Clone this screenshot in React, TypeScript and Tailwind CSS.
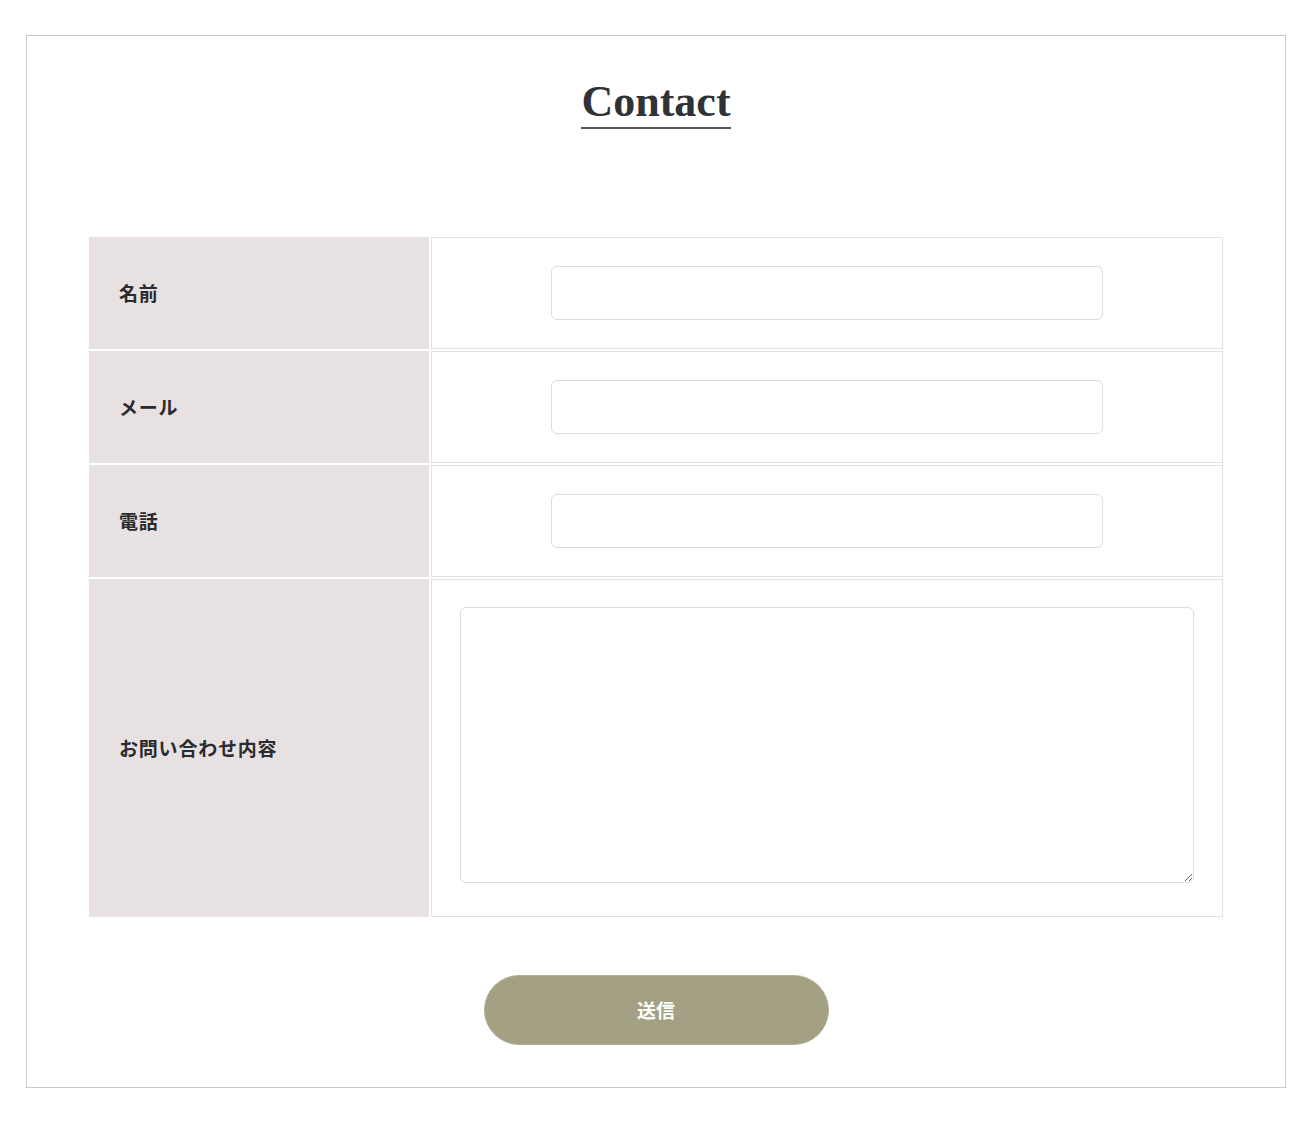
import React from 'react';

const fields = [
  { id: 'name', label: '名前', type: 'text' },
  { id: 'email', label: 'メール', type: 'email' },
  { id: 'tel', label: '電話', type: 'tel' },
];

const ContactPage = () => {
  return (
    <div className="min-h-screen bg-white pt-[35px] pl-[26px]">
      <div
        className="w-[1260px] border border-[#c9c9c9] pt-[44px] pb-[42px] px-[62px]"
        style={{ fontFamily: '"Noto Sans CJK JP", "Noto Sans", sans-serif' }}
      >
        {/* Title */}
        <div className="text-center">
          <h2
            className="inline-block text-[44px] leading-[44px] font-bold text-[#2f3338] pb-[3px] border-b-2 border-[#55585d]"
            style={{ fontFamily: '"Liberation Serif", "Times New Roman", serif' }}
          >
            Contact
          </h2>
        </div>

        {/* Form rows */}
        <form className="mt-[108px] flex flex-col gap-[2px]">
          {fields.map((f) => (
            <div key={f.id} className="flex gap-[2px] h-[112px]">
              <label
                htmlFor={f.id}
                className="w-[340px] shrink-0 bg-[#e7e1e1] flex items-center pl-[30px] text-[19px] tracking-[0.8px] font-bold text-[#2a2b2e]"
              >
                {f.label}
              </label>
              <div className="flex-1 border border-[#e6e0e0] flex items-center justify-center">
                <input
                  id={f.id}
                  type={f.type}
                  className="w-[552px] h-[54px] rounded-[6px] border border-[#e0dada] bg-white outline-none px-3"
                />
              </div>
            </div>
          ))}

          <div className="flex gap-[2px] h-[338px]">
            <label
              htmlFor="message"
              className="w-[340px] shrink-0 bg-[#e7e1e1] flex items-center pl-[30px] text-[19px] tracking-[0.8px] font-bold text-[#2a2b2e]"
            >
              お問い合わせ内容
            </label>
            <div className="flex-1 border border-[#e6e0e0] pt-[27px] px-[28px]">
              <textarea
                id="message"
                className="block w-full h-[276px] rounded-[6px] border border-[#e0dada] bg-white outline-none p-3"
              />
            </div>
          </div>

          {/* Submit */}
          <div className="flex justify-center mt-[56px]">
            <button
              type="button"
              className="w-[345px] h-[70px] rounded-full bg-[#a4a083] border border-[#b3b096] text-white text-[19px] font-bold"
            >
              送信
            </button>
          </div>
        </form>
      </div>
    </div>
  );
};

export default ContactPage;
